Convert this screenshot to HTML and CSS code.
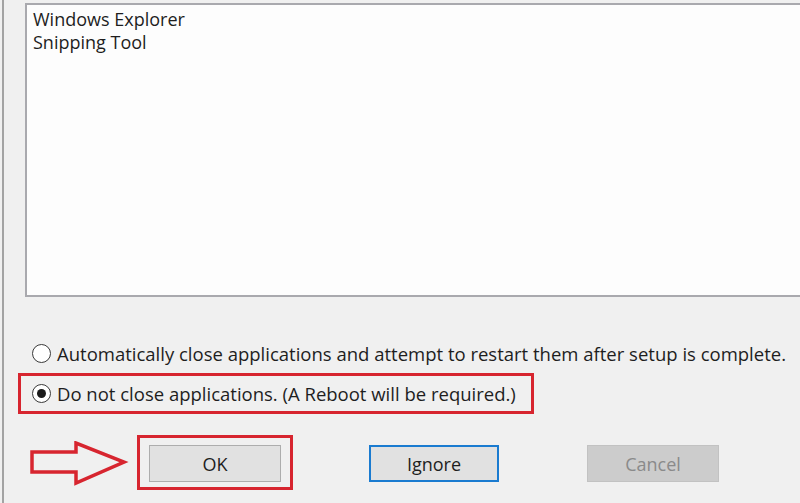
FILE: index.html
```html
<!DOCTYPE html>
<html>
<head>
<meta charset="utf-8">
<link rel="stylesheet" href="styles.css">
</head>
<body>
<div class="dialog">
  <div class="list">
    <div class="item">Windows Explorer</div>
    <div class="item">Snipping Tool</div>
  </div>
  <div class="options">
    <label class="opt"><span class="radio"></span><span>Automatically close applications and attempt to restart them after setup is complete.</span></label>
    <label class="opt"><span class="radio checked"></span><span>Do not close applications. (A Reboot will be required.)</span></label>
  </div>
  <div class="buttons">
    <button class="btn">OK</button>
    <button class="btn focus">Ignore</button>
    <button class="btn disabled">Cancel</button>
  </div>
  <div class="mark mark-opt"></div>
  <div class="mark mark-ok"></div>
  <svg class="arrow" width="100" height="50" viewBox="0 0 100 50">
    <path d="M2 11 H46 V2 L94 21 L46 42 V31 H2 Z" fill="none" stroke="#d7252f" stroke-width="3.5" stroke-linejoin="miter"/>
  </svg>
</div>
</body>
</html>
```
FILE: styles.css
```css
html, body {
  margin: 0;
  padding: 0;
  background: #f0f0f0;
  overflow: hidden;
}
body {
  width: 800px;
  height: 503px;
  font-family: "Open Sans", "Noto Sans", sans-serif;
  color: #1e1e1e;
}
.dialog {
  position: relative;
  margin-left: 2px;
  height: 503px;
  border-left: 2px solid #a3a3a3;
  display: flex;
  flex-direction: column;
  overflow: hidden;
}
.list {
  margin-top: 3px;
  margin-left: 21px;
  width: 800px;
  flex-shrink: 0;
  background: #fdfdfd;
  border: 2px solid #a9a9ae;
  padding: 3px 6px;
  box-sizing: border-box;
  height: 294px;
  font-size: 18px;
  line-height: 23px;
}
.options {
  margin-top: 46px;
  margin-left: 28px;
  display: flex;
  flex-direction: column;
  gap: 19px;
  font-size: 18.5px;
}
.opt {
  display: flex;
  align-items: center;
  gap: 6px;
  height: 21px;
  white-space: nowrap;
}
.radio {
  width: 19px;
  height: 19px;
  box-sizing: border-box;
  border: 1.5px solid #3a3a3a;
  border-radius: 50%;
  background: #fff;
  display: flex;
  align-items: center;
  justify-content: center;
  flex-shrink: 0;
}
.radio.checked::after {
  content: "";
  width: 9px;
  height: 9px;
  border-radius: 50%;
  background: #1a1a1a;
}
.buttons {
  margin-top: 41px;
  margin-left: 145px;
  display: flex;
  gap: 88px;
}
.btn {
  width: 132px;
  height: 37px;
  background: #e1e1e1;
  border: 1px solid #adadad;
  font-family: "Open Sans", "Noto Sans", sans-serif;
  font-size: 18px;
  color: #1e1e1e;
  padding: 0;
  box-sizing: border-box;
}
.btn.focus {
  width: 130px;
  border: 2px solid #1a7bd0;
}
.btn.disabled {
  background: #cccccc;
  border-color: #c2c2c2;
  color: #8a8a8a;
}
.mark {
  position: absolute;
  border: 3px solid #d7252f;
  box-sizing: border-box;
}
.mark-opt {
  left: 14px;
  top: 373px;
  width: 516px;
  height: 41px;
}
.mark-ok {
  left: 133px;
  top: 435px;
  width: 156px;
  height: 55px;
}
.arrow {
  position: absolute;
  left: 26px;
  top: 441px;
}
```
